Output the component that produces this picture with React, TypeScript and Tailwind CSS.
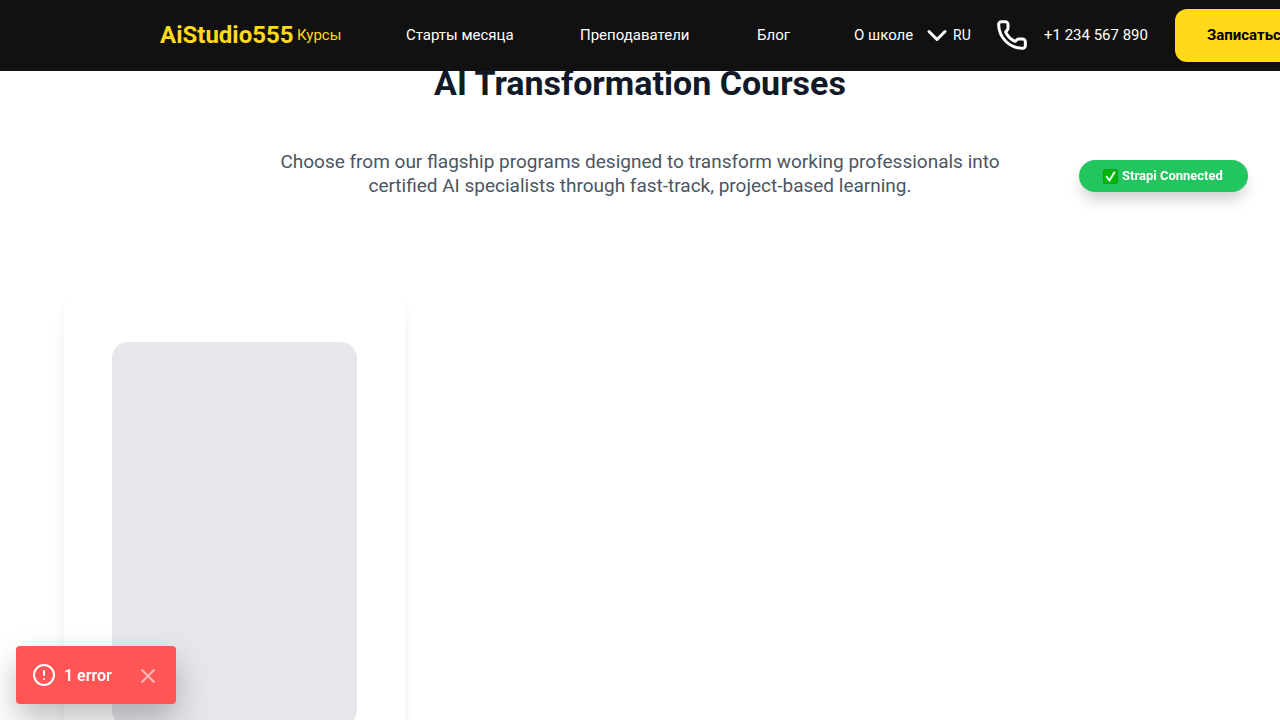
import { Phone } from 'lucide-react';

const links = [
  { label: 'Курсы', width: 'min-w-[45px]', active: true },
  { label: 'Старты месяца', width: 'min-w-[110px]', active: false },
  { label: 'Преподаватели', width: 'min-w-[113px]', active: false },
  { label: 'Блог', width: 'min-w-[33px]', active: false },
];

function Header() {
  return (
    <header className="fixed inset-x-0 top-0 z-20 flex h-[71px] items-center overflow-hidden whitespace-nowrap bg-[#111111] pb-px pl-40 text-[15px] leading-6 text-white">
      <a href="#home" className="w-[137px] shrink-0 text-2xl font-bold leading-8 text-[#ffd91a]">
        AiStudio555
      </a>
      <nav aria-label="Main" className="flex shrink-0 items-center gap-16">
        {links.map((link) => (
          <a
            key={link.label}
            href="#section"
            className={`${link.width} ${link.active ? 'text-[#ffd91a]' : 'text-white'}`}
          >
            {link.label}
          </a>
        ))}
        <button type="button" className="flex items-center">
          <span className="min-w-[71px] text-left">О школе</span>
          <svg className="size-6" viewBox="0 0 24 24" fill="none" stroke="currentColor" strokeWidth="3" strokeLinecap="round" strokeLinejoin="round" aria-hidden="true">
            <path d="M4 8.5l8 8 8-8" />
          </svg>
        </button>
      </nav>
      <button type="button" className="ml-1 w-[19px] shrink-0 text-left text-sm">
        RU
      </button>
      <a href="tel:+1234567890" className="ml-6 flex shrink-0 items-center gap-4">
        <Phone className="size-8" strokeWidth={2.25} aria-hidden="true" />
        <span className="min-w-[107px]">+1 234 567 890</span>
      </a>
      <button type="button" className="ml-6 h-[53px] shrink-0 rounded-xl bg-[#ffd91a] px-8 text-[15px] font-bold text-black">
        Записаться
      </button>
    </header>
  );
}

function CourseSkeleton() {
  return (
    <article aria-busy="true" className="rounded-2xl bg-white p-12 shadow-[0_10px_15px_-3px_rgba(0,0,0,0.1)]">
      <div className="h-96 rounded-2xl bg-[#e5e7eb]" />
    </article>
  );
}

function ErrorToast() {
  return (
    <div
      role="alert"
      className="fixed bottom-4 left-4 z-30 flex h-[58px] w-40 items-center gap-2 rounded bg-[#ff5555] pl-4 text-white shadow-[0_16px_32px_rgba(0,0,0,0.25)]"
    >
      <svg className="size-6" viewBox="0 0 24 24" fill="none" stroke="currentColor" strokeWidth="2" strokeLinecap="round" aria-hidden="true">
        <circle cx="12" cy="12" r="10" />
        <path d="M12 8v4M12 16h.01" />
      </svg>
      <span className="w-[62px] pt-0.5 font-semibold">1 error</span>
      <button type="button" aria-label="Dismiss" className="pt-0.5 opacity-60">
        <svg className="size-7" viewBox="0 0 28 28" fill="none" stroke="currentColor" strokeWidth="2" strokeLinecap="round" aria-hidden="true">
          <path d="M8 8l12 12M20 8L8 20" />
        </svg>
      </button>
    </div>
  );
}

function CheckBadge() {
  return (
    <svg className="size-[15px]" viewBox="0 0 15 15" fill="none" role="img" aria-label="OK">
      <rect x="0.5" y="0.5" width="14" height="14" rx="1.5" fill="#00b80c" stroke="#149a1c" />
      <path d="M3.2 7.2l3.3 4.2L11.8 2.8" stroke="#ffffff" strokeWidth="1.8" />
    </svg>
  );
}

export default function App() {
  return (
    <div className="min-h-screen overflow-x-clip bg-white font-[Roboto,'Liberation_Sans',sans-serif]">
      <Header />
      <main className="px-16 pt-[63px]">
        <section className="text-center">
          <h1 className="text-[34px] font-bold leading-10 text-[#111827]">AI Transformation Courses</h1>
          <p className="mx-auto mt-[47px] max-w-3xl text-[19px] leading-6 text-[#4b5563]">
            Choose from our flagship programs designed to transform working professionals into certified AI
            specialists through fast-track, project-based learning.
          </p>
        </section>
        <section aria-label="Courses" className="mt-24 grid grid-cols-3 gap-16">
          <CourseSkeleton />
        </section>
      </main>
      <div
        role="status"
        className="fixed right-8 top-40 z-10 flex h-8 min-w-[169px] items-center gap-1 whitespace-nowrap rounded-full bg-[#22c55e] px-6 text-[13px] font-bold text-white shadow-[0_10px_15px_-3px_rgba(0,0,0,0.2)]"
      >
        <CheckBadge />
        Strapi Connected
      </div>
      <ErrorToast />
    </div>
  );
}
